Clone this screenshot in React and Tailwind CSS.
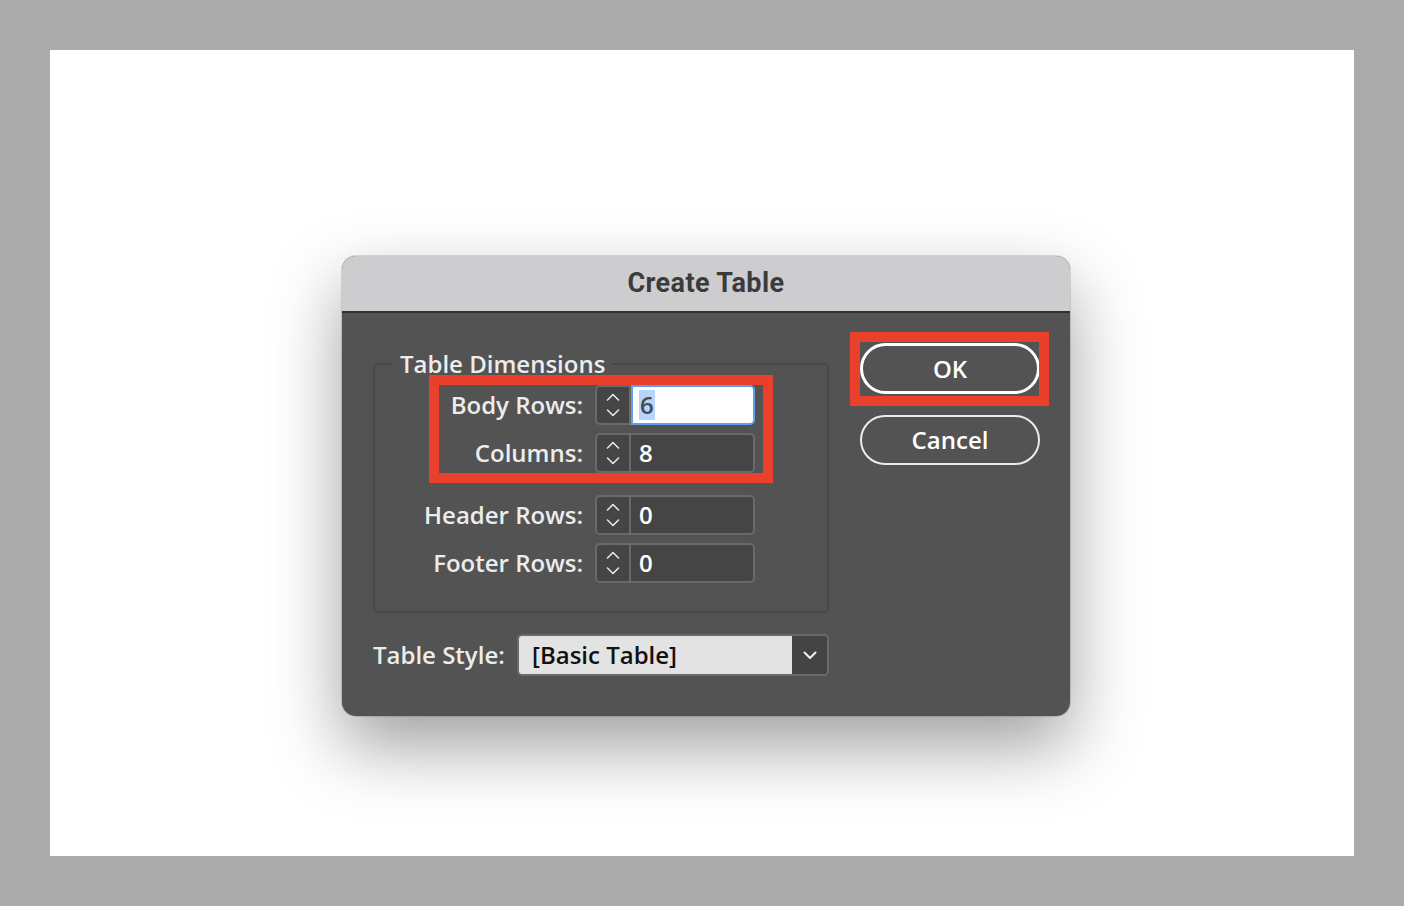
import React from "react";

const ui = { fontFamily: '"Open Sans", "DejaVu Sans", sans-serif' };

function Chevron({ dir = "up" }) {
  return (
    <svg width="14" height="8" viewBox="0 0 14 8">
      {dir === "up" ? (
        <path d="M1.5 7 L7 1.5 L12.5 7" fill="none" stroke="#e6e6e6" strokeWidth="1.6" strokeLinecap="round" strokeLinejoin="round" />
      ) : (
        <path d="M1.5 1 L7 6.5 L12.5 1" fill="none" stroke="#e6e6e6" strokeWidth="1.6" strokeLinecap="round" strokeLinejoin="round" />
      )}
    </svg>
  );
}

function Spinner({ label, value, focused }) {
  return (
    <div className="flex items-center h-[40px]">
      <div className="w-[208px] text-right text-[24px] font-semibold text-[#ececec] leading-none">{label}</div>
      <div className="ml-[12px] flex h-[40px] w-[160px] rounded-[5px] border-2 border-[#6a6a6a] bg-[#454545]">
        <div className="w-[34px] flex flex-col items-center justify-center gap-[8px] border-r-2 border-[#6a6a6a]">
          <Chevron dir="up" />
          <Chevron dir="down" />
        </div>
        {focused ? (
          <div className="-my-[2px] -mr-[2px] flex-1 flex items-center bg-white border-2 border-[#5d9ef0] rounded-r-[5px] pl-[6px]">
            <span className="bg-[#b5d5fd] text-[#4a4a4a] text-[24px] font-semibold leading-[30px] px-[1px]">{value}</span>
          </div>
        ) : (
          <div className="flex-1 flex items-center pl-[8px] text-[24px] font-semibold text-white">{value}</div>
        )}
      </div>
    </div>
  );
}

export default function App() {
  return (
    <div className="min-h-screen w-full bg-[#ababab] p-[50px]" style={ui}>
      <div className="w-[1304px] h-[806px] bg-white pl-[292px] pt-[206px]">
        <div className="w-[728px] rounded-[14px] overflow-hidden bg-[#535353] shadow-[0_0_0_1px_rgba(0,0,0,0.12),0_30px_70px_rgba(0,0,0,0.38)]">
          {/* title bar */}
          <div className="h-[57px] bg-[#cdcdcf] border-b-2 border-[#303030] flex items-center justify-center">
            <span className="font-bold text-[27px] text-[#3b3b3b] tracking-[0.4px]" style={{ fontFamily: "Roboto, sans-serif" }}>
              Create Table
            </span>
          </div>

          <div className="flex pl-[31px] pr-[30px] pt-[30px] pb-[40px]">
            {/* left column */}
            <div className="w-[456px] pt-[5px]">
              <fieldset className="border-2 border-[#474747] rounded-[5px] pb-[28px]">
                <legend className="ml-[18px] px-[7px] text-[24px] font-semibold leading-[32px] text-[#ececec]">Table Dimensions</legend>
                <div className="relative mt-[5px] flex flex-col gap-[8px]">
                  <Spinner label="Body Rows:" value="6" focused />
                  <Spinner label="Columns:" value="8" />
                  <div className="absolute top-[-10px] bottom-[-10px] left-[54px] w-[344px] border-[10px] border-[#e8402a] pointer-events-none" />
                </div>
                <div className="mt-[22px] flex flex-col gap-[8px]">
                  <Spinner label="Header Rows:" value="0" />
                  <Spinner label="Footer Rows:" value="0" />
                </div>
              </fieldset>

              <div className="mt-[21px] flex items-center">
                <span className="w-[144px] text-[24px] font-semibold text-[#ececec] leading-none">Table Style:</span>
                <div className="flex h-[42px] w-[312px] rounded-[5px] border-2 border-[#6a6a6a] overflow-hidden">
                  <div className="flex-1 bg-[#e3e3e3] flex items-center pl-[13px] text-[24px] font-semibold text-[#111]">[Basic Table]</div>
                  <div className="w-[35px] bg-[#444444] flex items-center justify-center">
                    <svg width="14" height="9" viewBox="0 0 14 9">
                      <path d="M1.5 1.5 L7 7 L12.5 1.5" fill="none" stroke="#f2f2f2" strokeWidth="2" strokeLinecap="round" strokeLinejoin="round" />
                    </svg>
                  </div>
                </div>
              </div>
            </div>

            {/* right column */}
            <div className="ml-[31px] w-[180px] flex flex-col">
              <div className="relative">
                <button className="w-[180px] h-[51px] rounded-full border-[3px] border-white text-white text-[24px] font-semibold flex items-center justify-center">
                  OK
                </button>
                <div className="absolute top-[-11px] bottom-[-12px] left-[-10px] right-[-9px] border-[10px] border-[#e8402a] pointer-events-none" />
              </div>
              <button className="mt-[21px] w-[180px] h-[50px] rounded-full border-2 border-[#ececec] text-white text-[24px] font-semibold flex items-center justify-center">
                Cancel
              </button>
            </div>
          </div>
        </div>
      </div>
    </div>
  );
}
